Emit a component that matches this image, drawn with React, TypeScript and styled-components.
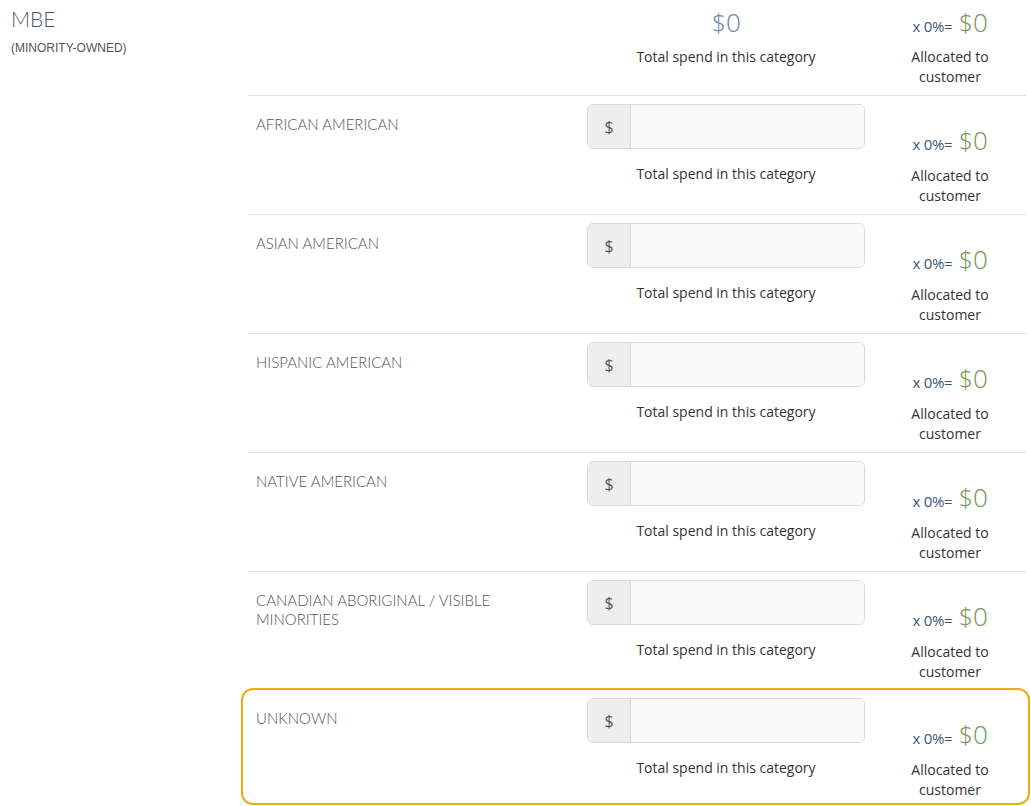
import styled, { createGlobalStyle, css } from "styled-components";

const GlobalStyle = createGlobalStyle`
  html, body {
    margin: 0;
    padding: 0;
    background: #ffffff;
  }
  body {
    font-family: "Open Sans", "Liberation Sans", sans-serif;
    color: #333;
  }
`;

const Page = styled.div`
  display: grid;
  grid-template-columns: 248px 779px;
  width: 1031px;
`;

const Side = styled.div`
  padding: 6px 0 0 11px;
`;

const GroupTitle = styled.div`
  font-family: "Lato Light", Lato, "Liberation Sans", sans-serif;
  font-weight: 300;
  font-size: 21px;
  line-height: 26px;
  color: #4f5a70;
`;

const GroupSub = styled.div`
  margin-top: 9px;
  font-family: "Liberation Sans", Arial, sans-serif;
  font-size: 12px;
  color: #555;
`;

const Rows = styled.div`
  display: flex;
  flex-direction: column;
`;

const Row = styled.div<{ $first?: boolean; $highlight?: boolean }>`
  display: grid;
  grid-template-columns: 339px 278px 1fr;
  align-items: start;
  height: ${(p) => (p.$first ? "95px" : "118px")};
  border-top: ${(p) => (p.$first ? "none" : "1px solid #e3e3e3")};
  ${(p) =>
    p.$highlight &&
    css`
      height: 113px;
      margin: -2px -3px 0 -7px;
      padding: 0 1px 0 5px;
      border: 2px solid #f5a90a;
      border-radius: 12px;
    `}
`;

const Label = styled.div`
  padding: 19px 0 0 8px;
  width: 260px;
  font-family: "Lato Light", Lato, "Liberation Sans", sans-serif;
  font-weight: 300;
  font-size: 15px;
  line-height: 19px;
  color: #555;
  text-transform: uppercase;
`;

const SpendCol = styled.div<{ $first?: boolean }>`
  display: flex;
  flex-direction: column;
  align-items: center;
  padding-top: ${(p) => (p.$first ? "4px" : "8px")};
`;

const Amount = styled.div<{ $tone: "blue" | "green" }>`
  font-family: "Open Sans Light", "Open Sans", "Liberation Sans", sans-serif;
  font-weight: 300;
  font-size: 26px;
  line-height: 36px;
  color: ${(p) => (p.$tone === "blue" ? "#6f8bab" : "#7c9a58")};
`;

const InputGroup = styled.div`
  display: flex;
  width: 278px;
  height: 45px;
  box-sizing: border-box;
  border: 1px solid #dadada;
  border-radius: 6px;
  overflow: hidden;
`;

const Addon = styled.span`
  display: flex;
  align-items: center;
  justify-content: center;
  width: 42px;
  background: #eeeeee;
  border-right: 1px solid #dadada;
  font-size: 16px;
  color: #555;
`;

const Field = styled.input`
  flex: 1;
  border: none;
  outline: none;
  background: #f9f9f9;
  padding: 0 10px;
  font-family: inherit;
  font-size: 15px;
`;

const Caption = styled.div<{ $gap: number }>`
  margin-top: ${(p) => p.$gap}px;
  font-size: 14px;
  line-height: 20px;
  color: #333;
  text-align: center;
`;

const AllocCol = styled.div<{ $first?: boolean }>`
  display: flex;
  flex-direction: column;
  align-items: center;
  padding: ${(p) => (p.$first ? "4px" : "26px")} 0 0 8px;
`;

const AllocLine = styled.div`
  display: flex;
  align-items: baseline;
  font-size: 15px;
  letter-spacing: -0.3px;
  color: #3c5876;
`;

const AllocText = styled.span`
  margin-right: 6px;
`;

const categories = [
  "African American",
  "Asian American",
  "Hispanic American",
  "Native American",
  "Canadian Aboriginal / Visible Minorities",
  "Unknown",
];

function Allocated({ first }: { first?: boolean }) {
  return (
    <AllocCol $first={first}>
      <AllocLine>
        <AllocText>x 0%=</AllocText>
        <Amount $tone="green">$0</Amount>
      </AllocLine>
      <Caption $gap={first ? 7 : 8}>
        Allocated to
        <br />
        customer
      </Caption>
    </AllocCol>
  );
}

export default function App() {
  return (
    <>
      <GlobalStyle />
      <Page>
        <Side>
          <GroupTitle>MBE</GroupTitle>
          <GroupSub>(MINORITY-OWNED)</GroupSub>
        </Side>
        <Rows>
          <Row $first>
            <div />
            <SpendCol $first>
              <Amount $tone="blue">$0</Amount>
              <Caption $gap={7}>Total spend in this category</Caption>
            </SpendCol>
            <Allocated first />
          </Row>
          {categories.map((name, i) => (
            <Row key={name} $highlight={i === categories.length - 1}>
              <Label>{name}</Label>
              <SpendCol>
                <InputGroup>
                  <Addon>$</Addon>
                  <Field type="text" />
                </InputGroup>
                <Caption $gap={15}>Total spend in this category</Caption>
              </SpendCol>
              <Allocated />
            </Row>
          ))}
        </Rows>
      </Page>
    </>
  );
}
